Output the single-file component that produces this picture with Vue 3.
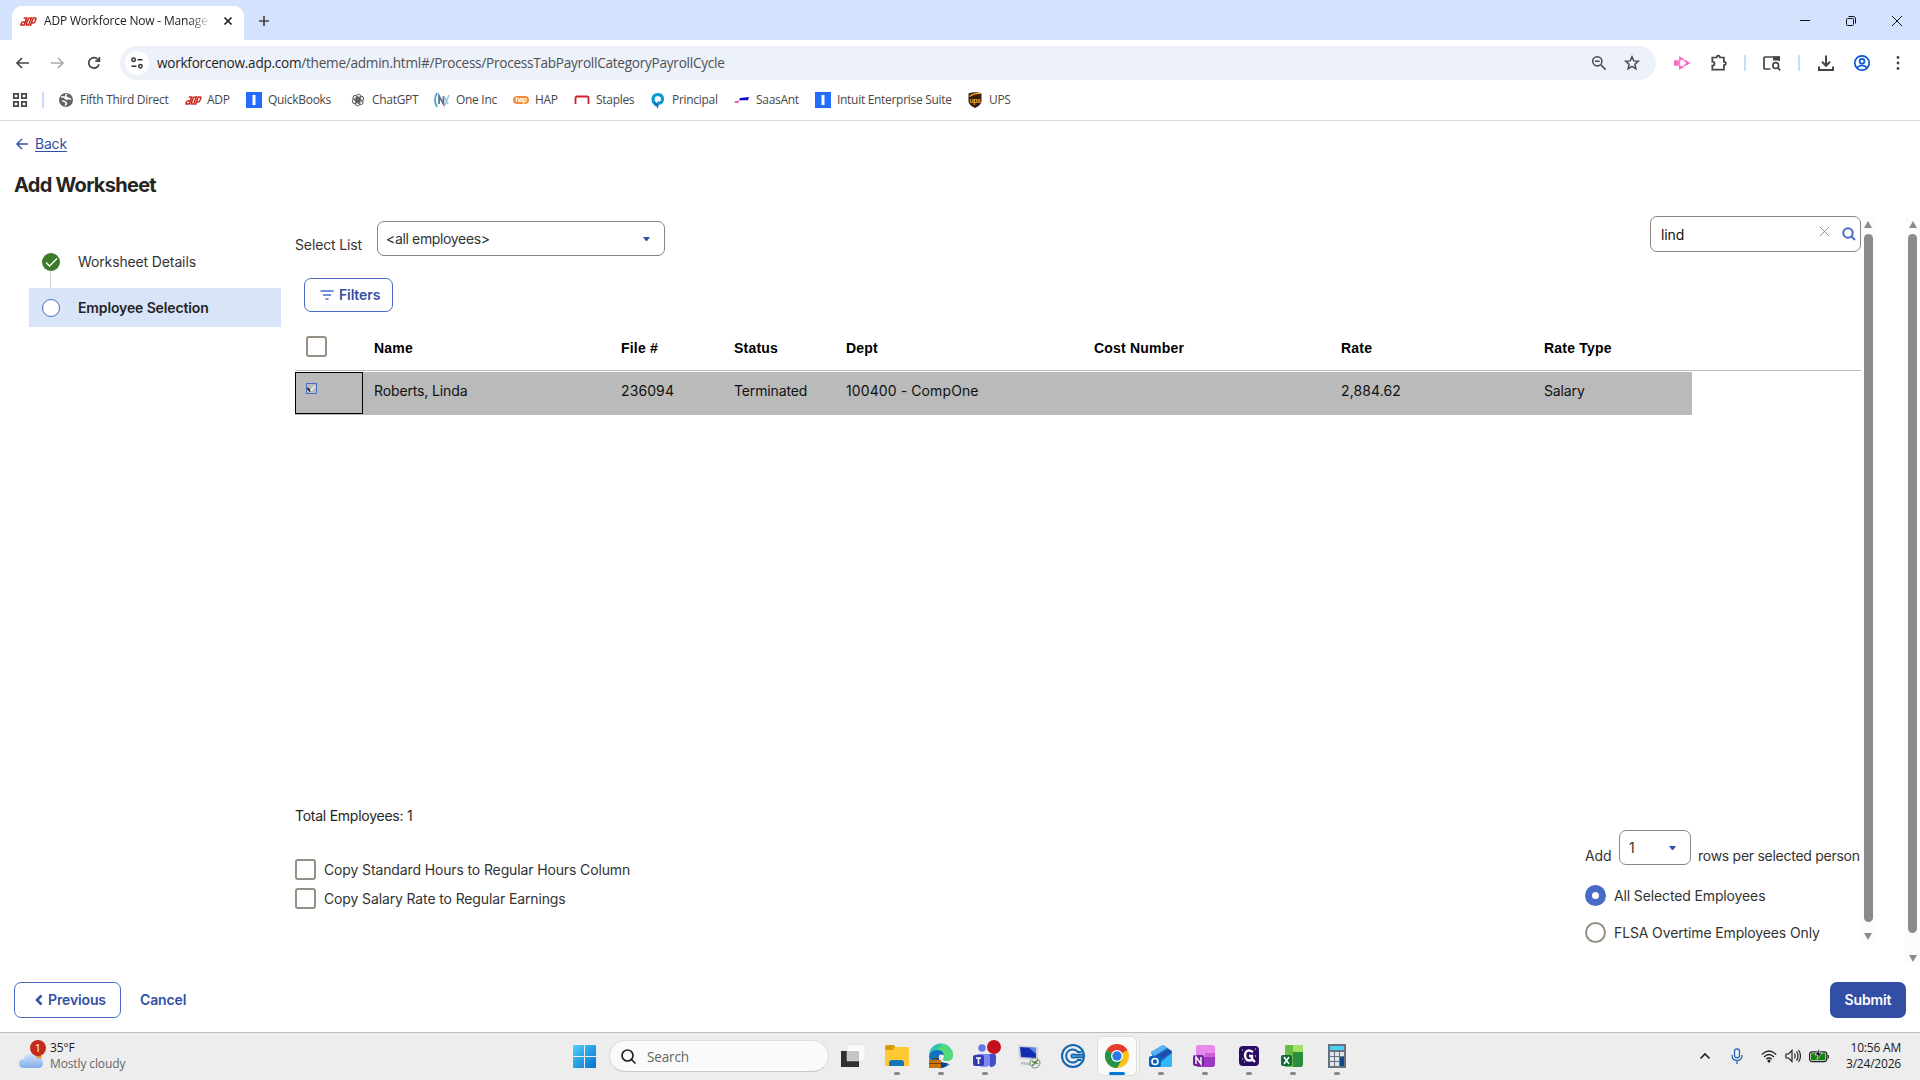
<template>
  <div class="screen">
    <header class="tabs">
      <div class="tab">
        <svg class="adp" viewBox="0 0 16 9"><g transform="translate(2.6 0) skewX(-20)"><path d="M1.500 1h3v7h-2.500q-1 0-1-1.500t1-1.500h2.500M9 8V1H7.500q-1.200 0-1.200 1.500v4Q6.300 8 7.500 8zM11 9V1h1.800q1.200 0 1.200 1.500v2Q14 6 12.800 6H11" /></g></svg>
        <span class="tab-title">ADP Workforce Now - Manage</span>
        <svg class="tab-close" viewBox="0 0 10 10"><path d="M1.5 1.5l7 7M8.5 1.5l-7 7" /></svg>
      </div>
      <svg class="plus" viewBox="0 0 12 12"><path d="M6 1v10M1 6h10" /></svg>
      <div class="window-buttons">
        <svg viewBox="0 0 12 12"><path d="M1 5.5h10" /></svg>
        <svg viewBox="0 0 12 12"><rect x="1.5" y="3.5" width="7" height="7" rx="1" /><path d="M3.5 1.5H8q2.5 0 2.5 2.5v4.5" /></svg>
        <svg viewBox="0 0 12 12"><path d="M1 1l10 10M11 1L1 11" /></svg>
      </div>
    </header>

    <div class="toolbar">
      <svg class="nav-icon" viewBox="0 0 16 16"><path d="M15 8H3M8 3L3 8l5 5" /></svg>
      <svg class="nav-icon off" viewBox="0 0 16 16"><path d="M1 8h12M8 3l5 5-5 5" /></svg>
      <svg class="nav-icon" viewBox="0 0 16 16"><path d="M13 9.2A5.2 5.2 0 1 1 11.8 4.4L13.2 5.8M13.4 2v4.1H9.3" /></svg>
      <div class="omnibox">
        <span class="site">
          <svg viewBox="0 0 14 14"><circle cx="3.6" cy="3.7" r="1.7" /><path d="M7.5 3.7h5M1.5 10.3h5" /><circle cx="10.4" cy="10.3" r="1.7" /></svg>
        </span>
        <span class="url"><b>workforcenow.adp.com</b>/theme/admin.html#/Process/ProcessTabPayrollCategoryPayrollCycle</span>
        <svg class="tool zoom-out" viewBox="0 0 16 16"><circle cx="6.3" cy="6.3" r="4.6" /><path d="M9.8 9.8l4.8 4.8M4 6.3h4.6" /></svg>
        <svg class="tool" viewBox="0 0 16 16"><path d="M8 1.8l1.8 4.1 4.5.4-3.4 3 1 4.4L8 11.4l-3.9 2.3 1-4.4-3.4-3 4.5-.4z" /></svg>
      </div>
      <div class="tools">
        <svg class="pink" viewBox="0 0 16 16"><path class="solid" d="M0 5.2h4.800v5.600H0zM5.200 1.200l5 2.800-5 1.400zM10.500 4.500L16.500 8l-6 3.500 1.500-3.500zM5.200 10.600l5 1.400-5 2.800z" /><path class="thin" d="M5.700 3v10l8.500-5z" /></svg>
        <svg viewBox="0 0 16 16"><path d="M1.3 2.5h4.4q0-1.8 1.6-1.8t1.6 1.8h4v4.3q2 0 2 1.6t-2 1.6v4.7H1.3v-4q2.2 0 2.2-2t-2.2-2z" /></svg>
        <i class="divider"></i>
        <svg class="wide" viewBox="0 0 18 16"><path d="M7.5 14H2q-1 0-1-1V3q0-1 1-1h14v4" /><path class="solid" d="M10 1.5h7v4h-7z" /><circle cx="12.7" cy="10.6" r="2.9" /><path d="M14.8 12.8l2.5 2.6" /></svg>
        <i class="divider"></i>
        <svg class="bold" viewBox="0 0 16 16"><path d="M8 .5v10M4 6.8l4 4 4-4M1 11.5V15h14v-3.5" /></svg>
        <svg class="person" viewBox="0 0 16 16"><circle cx="8" cy="8" r="7.2" /><circle cx="8" cy="6.2" r="2.4" /><path d="M3 13q2-2.6 5-2.6t5 2.6" /></svg>
        <svg class="dots" viewBox="0 0 16 16"><circle cx="8" cy="2.5" r="1.4" /><circle cx="8" cy="8" r="1.4" /><circle cx="8" cy="13.5" r="1.4" /></svg>
      </div>
    </div>

    <nav class="bookmarks">
      <svg class="apps" viewBox="0 0 14 14"><path d="M.8.8h4.4v4.4H.8zM8.8.8h4.4v4.4H8.8zM.8 8.8h4.4v4.4H.8zM8.8 8.8h4.4v4.4H8.8z" /></svg>
      <i class="divider"></i>
      <div v-for="mark in bookmarks" :key="mark.label" class="bookmark" :style="{ width: mark.width + 'px' }">
        <svg v-if="mark.icon === 'globe'" class="mark" viewBox="0 0 16 16"><circle cx="8" cy="8" r="7" fill="#5f6368" /><path d="M3 5q3-.5 4 1t3 1M9 2q-3 2 0 3.500t4 2M4 9q3 0 4 1.500t-1 3" fill="none" stroke="#fff" stroke-width="1.5" /></svg>
        <svg v-else-if="mark.icon === 'adp'" class="mark adp" viewBox="0 0 16 9"><g transform="translate(2.6 0) skewX(-20)"><path d="M1.500 1h3v7h-2.500q-1 0-1-1.500t1-1.500h2.500M9 8V1H7.500q-1.200 0-1.200 1.500v4Q6.300 8 7.500 8zM11 9V1h1.800q1.200 0 1.200 1.500v2Q14 6 12.800 6H11" /></g></svg>
        <svg v-else-if="mark.icon === 'intuit'" class="mark" viewBox="0 0 16 16"><path d="M0 0h16v16H0z" fill="#236cff" /><path d="M6.500 3h3v10h-3z" fill="#fff" /></svg>
        <svg v-else-if="mark.icon === 'gpt'" class="mark" viewBox="0 0 16 16"><g fill="none" stroke="#555" stroke-width=".9"><rect v-for="n in 6" :key="n" x="6.300" y="2.200" width="4.400" height="7" rx="2.200" :transform="`rotate(${n * 60} 8 8)`" /></g></svg>
        <svg v-else-if="mark.icon === 'one'" class="mark" viewBox="0 0 16 16"><path d="M3 1Q-1 8 3 15" stroke="#4aa3d8" stroke-width="1.800" /><path d="M5 12V4l4.500 8V4" stroke="#64748b" stroke-width="1.800" /><path d="M10 4l4 8M15 3l-4 10" stroke="#9cc6e2" stroke-width="1.600" /></svg>
        <svg v-else-if="mark.icon === 'hap'" class="mark" viewBox="0 0 16 16"><rect y="4" width="16" height="8" rx="4" fill="#f58a3c" /><text x="8" y="10.300" text-anchor="middle" font-size="7" font-weight="700" fill="#fff">hap</text></svg>
        <svg v-else-if="mark.icon === 'staples'" class="mark" viewBox="0 0 16 16"><path d="M1.500 12V6.500Q1.500 4.500 3 4.500h10q1.500 0 1.500 2V12" stroke="#cf1f2e" stroke-width="1.800" /></svg>
        <svg v-else-if="mark.icon === 'principal'" class="mark" viewBox="0 0 16 16"><path d="M8.500 11.500q4-.5 4-4.500T8 2.500Q3 2.500 3 7.500q0 3.500 4 6" stroke="#079bd0" stroke-width="3" /><path d="M4 10q2.500 1 3.500 4.500 1-2.500.5-5" stroke="#0070bd" stroke-width="1.500" /></svg>
        <svg v-else-if="mark.icon === 'saas'" class="mark" viewBox="0 0 16 16"><path d="M6 6l9-1-1 3.200H5z" fill="#1306c8" /><path d="M1 9l4-.5-.5 2.500H.5z" fill="#f35cb8" /></svg>
        <svg v-else class="mark" viewBox="0 0 16 16"><path d="M1.500 1.500Q8-1 14.500 1.500V9q0 4-6.500 7-6.500-3-6.500-7z" fill="#351c15" /><path d="M2.500 4.500Q7 1 13.500 1.500" stroke="#f6a623" /><text x="8" y="10.500" text-anchor="middle" font-size="7" font-weight="700" fill="#f6a623">ups</text></svg>
        <span>{{ mark.label }}</span>
      </div>
    </nav>

    <main class="page">
      <a class="back"><svg viewBox="0 0 12 12"><path d="M12 6H1M6 1L1 6l5 5" /></svg><span>Back</span></a>
      <h1>Add Worksheet</h1>
      <div class="body">
        <aside class="steps">
          <div class="step">
            <svg viewBox="0 0 18 18"><circle cx="9" cy="9" r="9" fill="#3b7a2a" /><path d="M4 9.500l3.500 3.500L15 5.500" /></svg>
            <span>Worksheet Details</span>
          </div>
          <i class="connector"></i>
          <div class="step current">
            <i class="ring"></i>
            <span>Employee Selection</span>
          </div>
        </aside>

        <section class="main">
          <div class="list-row">
            <label>Select List</label>
            <div class="select employees"><span>&lt;all employees&gt;</span><i class="caret"></i></div>
            <div class="search">
              <span>lind</span>
              <svg class="clear" viewBox="0 0 12 12"><path d="M1 1l10 10M11 1L1 11" /></svg>
              <svg class="find" viewBox="0 0 14 14"><circle cx="6" cy="6" r="4.700" /><path d="M9.500 9.500l3.500 3.500" /></svg>
            </div>
          </div>
          <button class="filters">
            <svg viewBox="0 0 14 10"><path d="M.5 1h13M3 5h8" /><path d="M5.500 9h3" /></svg>
            <span>Filters</span>
          </button>
          <div class="grid head">
            <div class="pick"><i class="box"></i></div>
            <div v-for="c in columns" :key="c">{{ c }}</div>
          </div>
          <div class="grid row">
            <div class="pick focused"><i class="tiny"><svg viewBox="0 0 9 9"><path d="M.5 4l3 3.500" stroke="#111" /><path d="M3.500 7L8 2" stroke="#eee" /></svg></i></div>
            <div v-for="(v, i) in employee" :key="i" :class="{ num: /^\d/.test(v) }">{{ v }}</div>
          </div>

          <div class="bottom">
            <div class="copy">
              <p>Total Employees: <span>1</span></p>
              <label v-for="o in options" :key="o"><i class="box"></i><span>{{ o }}</span></label>
            </div>
            <div class="adding">
              <div class="add-row">
                <span class="add">Add</span>
                <div class="select count"><span>1</span><i class="caret"></i></div>
                <span class="per">rows per selected person</span>
              </div>
              <label><i class="radio on"></i><span>All Selected Employees</span></label>
              <label><i class="radio"></i><span>FLSA Overtime Employees Only</span></label>
            </div>
          </div>
        </section>

        <div class="scroll inner"><i class="up"></i><i class="thumb"></i><i class="down"></i></div>
        <div class="scroll outer"><i class="up"></i><i class="thumb"></i><i class="down"></i></div>
      </div>
      <footer class="actions">
        <button class="previous"><svg viewBox="0 0 8 12"><path d="M6.500 1.500L2 6l4.500 4.500" /></svg><span>Previous</span></button>
        <button class="cancel">Cancel</button>
        <button class="submit">Submit</button>
      </footer>
    </main>

    <div class="taskbar">
      <div class="weather">
        <svg viewBox="0 0 28 30">
          <defs><linearGradient id="cloud" x2="0" y2="1"><stop stop-color="#d4e5fc" /><stop offset="1" stop-color="#82aeea" /></linearGradient></defs>
          <circle cx="18" cy="17" r="4.500" fill="#f28b1d" />
          <path d="M5 28q-5 0-5-4.500T5 19q1-5.500 6.500-5.500T18 18q6 0 6 5t-5 5z" fill="url(#cloud)" />
          <circle cx="19" cy="8" r="8" fill="#c42b1c" />
          <text x="19" y="12" font-size="11" fill="#fff" text-anchor="middle">1</text>
        </svg>
        <p>35°F<br><span>Mostly cloudy</span></p>
      </div>

      <svg class="start" viewBox="0 0 23 23"><defs><linearGradient id="win" x2="1" y2="1"><stop stop-color="#4fd0fb" /><stop offset="1" stop-color="#0670ce" /></linearGradient></defs><path d="M0 1q0-1 1-1h10v11H0zM12 0h10q1 0 1 1v10H12zM0 12h11v11H1q-1 0-1-1zM12 12h11v10q0 1-1 1H12z" fill="url(#win)" /></svg>
      <div class="find-box">
        <svg viewBox="0 0 15 15"><circle cx="6.500" cy="6.500" r="5.500" /><path d="M10.500 10.500l4 4" /></svg>
        <span>Search</span>
      </div>

      <div class="tasks">
        <div v-for="app in apps" :key="app.name" class="task" :class="[app.name, { running: app.running }]">
          <svg viewBox="0 0 24 24">
            <g v-if="app.name === 'view'"><path d="M0 7h18v16H0z" fill="#303030" /><path d="M6 1h18v16H6z" fill="#fff" fill-opacity=".72" stroke="#ddd" stroke-width=".5" /></g>
            <g v-else-if="app.name === 'files'"><path d="M0 3q0-2 2-2h7l2 3h13v18H0z" fill="#d99a0c" /><path d="M0 6h8l2-3h13q1 0 1 1v17q0 1-1 1H1q-1 0-1-1z" fill="#ffc936" /><path d="M4 22v-3q0-3 3-3h9q3 0 3 3v3z" fill="#1475bd" /></g>
            <g v-else-if="app.name === 'edge'"><path d="M0 12A12 12 0 0 1 24 11q0 6-7 6-3 0-3-2 2-2 0-5Q10 6 4 10z" fill="#2fc3b4" /><path d="M13 0q10 1 11 11 0 5-6 6-4-1-4-2 3-2 0-6-1-3-6-3z" fill="#54d978" /><path d="M0 13q1-7 8-7 6 0 7 5-6-2-6 4 2 7 12 5-5 5-12 4Q1 22 0 13z" fill="#126fc2" /><path d="M10 11q-2 8 9 8-2 4-8 5-5-6-1-13" fill="#153d86" /><path d="M0 16h12v8H0z" fill="#c8730d" /><path d="M4 16v-1.500h4V16M0 19.500h12" stroke="#70400c" fill="none" /></g>
            <g v-else-if="app.name === 'teams'"><circle cx="9" cy="4" r="3.700" fill="#6875e3" /><path d="M13 10h8q2 0 2 2v6q0 5-6 5z" fill="#424fc6" /><path d="M4 10h11q2 0 2 2v6q0 5-6 5-8 0-8-7z" fill="#7c86f4" /><rect y="11" width="11" height="11" rx="2" fill="#303caf" /><path d="M3 14h5M5.500 14v6" stroke="#fff" stroke-width="1.500" /></g>
            <g v-else-if="app.name === 'remote'"><path d="M1 1l20 2v13L2 15z" fill="#cdd2db" /><path d="M3 3l16 1v10L4 13z" fill="#122cb2" /><path d="M11 3l8 1v6z" fill="#5c88e5" /><path d="M5 18l11 1v3L3 20z" fill="#bbc1ca" /><circle cx="18" cy="19" r="5" fill="#e7ebe3" stroke="#888" /><path d="M15 17l3 2-3 3M21 16l-3 2 3 2" stroke="#41843b" stroke-width="1.200" fill="none" /></g>
            <g v-else-if="app.name === 'cc'" fill="none" stroke="#0d65b3" stroke-width="2"><circle cx="12" cy="12" r="11" /><path d="M20.500 8H17A6.600 6.600 0 1 0 17 16h3.500M23 10.800h-9q-3.500-1-3.500 1.200t3.500 1.200h9" /></g>
            <g v-else-if="app.name === 'chrome'"><circle cx="12" cy="12" r="12" fill="#fbc116" /><path d="M12 12L1.600 6A12 12 0 0 1 22.400 6z" fill="#e33b2e" /><path d="M12 12L1.600 6A12 12 0 0 0 12 24L17.200 15z" fill="#229447" /><circle cx="12" cy="12" r="6" fill="#fff" /><circle cx="12" cy="12" r="4.700" fill="#2878e8" /></g>
            <g v-else-if="app.name === 'outlook'"><path d="M2 8L14 1l9 6v13q0 3-3 3H7z" fill="#167bd8" /><path d="M2 8l12-7 4 3L5 12z" fill="#55b3ef" /><path d="M7 12l12-7 4 3-11 8z" fill="#244ba7" /><path d="M23 9v12q0 2-3 2H6z" fill="#32b8f5" /><rect y="12" width="12" height="11" rx="2" fill="#0b61bd" /><circle cx="6" cy="17.500" r="3" fill="none" stroke="#fff" stroke-width="1.600" /></g>
            <g v-else-if="app.name === 'note'"><path d="M5 1h14q3 0 3 3v18H5q-2 0-2-2V3q0-2 2-2z" fill="#e68bea" /><path d="M12 13h10v7q0 3-3 3H4v-9z" fill="#9c38c4" /><path d="M12 9h10v4H12z" fill="#cb60d8" /><rect y="11" width="11" height="11" rx="2" fill="#71259a" /><path d="M3 20v-7l5 7v-7" fill="none" stroke="#fff" stroke-width="1.400" /></g>
            <g v-else-if="app.name === 'gq'"><rect x="2" y="2" width="20" height="20" rx="4" fill="#2c0b62" /><path d="M16 8q-7-4-8 3 0 7 7 5v-4h-3M15 15l3 3" fill="none" stroke="#fff" stroke-width="2.400" /><path d="M5 6h1M7 18h1M18 5h1M5 15h1M18 12h1" stroke="#fff" /></g>
            <g v-else-if="app.name === 'excel'"><path d="M5 1h17v19q0 3-3 3H4V3q0-2 1-2z" fill="#66bd46" /><path d="M12 1h10v7H12z" fill="#a4df68" /><path d="M12 8h10v12q0 3-3 3h-7z" fill="#2c8c40" /><rect y="11" width="11" height="11" rx="2" fill="#14693a" /><path d="M3 13l5 7M8 13l-5 7" stroke="#fff" stroke-width="1.500" /></g>
            <g v-else><path d="M3 0h18v24H3z" fill="#66727e" /><path d="M5 2h14v4H5z" fill="#4bd1f3" /><path d="M5 8h4v4H5zM10 8h4v4h-4zM15 8h4v4h-4zM5 13h4v4H5zM10 13h4v4h-4zM5 18h4v4H5zM10 18h4v4h-4z" fill="#e0e4e8" /><path d="M15 13h4v9h-4z" fill="#11478b" /></g>
          </svg>
          <i v-if="app.name === 'teams'" class="alert"></i>
        </div>
      </div>

      <div class="tray">
        <svg class="chev" viewBox="0 0 12 8"><path d="M1.500 6.500L6 2l4.500 4.500" /></svg>
        <svg class="mic" viewBox="0 0 12 16"><rect x="3.500" y=".8" width="5" height="9" rx="2.500" /><path d="M1 7q0 5.500 5 5.500T11 7M6 12.500V16" /></svg>
        <svg class="wifi" viewBox="0 0 16 13"><path d="M.8 4.500q7.200-7 14.400 0M3 7q5-5 10 0M5.200 9.300q2.800-2.600 5.600 0" /><circle cx="8" cy="11" r="1.500" fill="#222" stroke="none" /></svg>
        <svg class="sound" viewBox="0 0 17 14"><path d="M1 5h2.500L7 1.500v11L3.500 9H1zM9.500 4.500q1.500 2.500 0 5M11.500 2.500q3 4.500 0 9M13.500 1q4 6 0 12" /></svg>
        <svg class="battery" viewBox="0 0 20 14"><rect x=".6" y="2.800" width="17.200" height="9.800" rx="2.500" /><rect x="2" y="4.200" width="14.400" height="7" rx="1" fill="#13850f" stroke="none" /><path d="M19.300 6v3.500" /><path d="M10.500-1L6 6h3L8 10.500 13 4h-3z" fill="#111" stroke="#eee" stroke-width=".7" /></svg>
        <p>10:56 AM<br>3/24/2026</p>
      </div>
    </div>
  </div>
</template>

<script setup>
const bookmarks = [
  { label: 'Fifth Third Direct', icon: 'globe', width: 127 },
  { label: 'ADP', icon: 'adp', width: 61 },
  { label: 'QuickBooks', icon: 'intuit', width: 104 },
  { label: 'ChatGPT', icon: 'gpt', width: 84 },
  { label: 'One Inc', icon: 'one', width: 79 },
  { label: 'HAP', icon: 'hap', width: 61 },
  { label: 'Staples', icon: 'staples', width: 76 },
  { label: 'Principal', icon: 'principal', width: 84 },
  { label: 'SaasAnt', icon: 'saas', width: 81 },
  { label: 'Intuit Enterprise Suite', icon: 'intuit', width: 152 },
  { label: 'UPS', icon: 'ups', width: 60 },
];

const columns = ['Name', 'File #', 'Status', 'Dept', 'Cost Number', 'Rate', 'Rate Type'];
const employee = ['Roberts, Linda', '236094', 'Terminated', '100400 - CompOne', '', '2,884.62', 'Salary'];

const options = [
  'Copy Standard Hours to Regular Hours Column',
  'Copy Salary Rate to Regular Earnings',
];

const apps = [
  { name: 'view' },
  { name: 'files', running: true },
  { name: 'edge', running: true },
  { name: 'teams', running: true },
  { name: 'remote' },
  { name: 'cc' },
  { name: 'chrome', running: true },
  { name: 'outlook', running: true },
  { name: 'note', running: true },
  { name: 'gq', running: true },
  { name: 'excel', running: true },
  { name: 'calc', running: true },
];
</script>

<style>
body {
  margin: 0;
  overflow: hidden;
}
</style>

<style scoped>
* {
  box-sizing: border-box;
}

.screen {
  width: 1920px;
  height: 1080px;
  display: flex;
  flex-direction: column;
  background: #fff;
  color: #333;
  font: 12px "Open Sans", "Noto Sans", sans-serif;
  white-space: nowrap;
  overflow: hidden;
}

svg {
  display: block;
  flex: none;
  fill: none;
  overflow: visible;
}

i {
  display: block;
  flex: none;
}

p, h1 {
  margin: 0;
}

button {
  font: inherit;
  letter-spacing: inherit;
  background: none;
  border: 0;
  padding: 0;
}

/* browser */
.tabs {
  height: 40px;
  flex: none;
  display: flex;
  align-items: center;
  padding: 6px 16px 0 12px;
  background: #d3e3fd;
}

.tab {
  width: 232px;
  height: 34px;
  display: flex;
  align-items: center;
  padding: 0 10px 4px 8px;
  border-radius: 10px 10px 0 0;
  background: #fff;
}

.adp {
  width: 16px;
  height: 9px;
  stroke: #d0271d;
  stroke-width: 1.6;
}

.tab-title {
  width: 164px;
  margin-left: 8px;
  padding-bottom: 1px;
  color: #202124;
  letter-spacing: -.18px;
  overflow: hidden;
  mask-image: linear-gradient(90deg, #000 88%, transparent 102%);
}

.tab-close {
  width: 10px;
  height: 10px;
  margin-left: auto;
  margin-right: 1px;
  stroke: #222;
  stroke-width: 1.7;
}

.plus {
  width: 12px;
  height: 12px;
  margin: 0 0 4px 14px;
  stroke: #444;
  stroke-width: 1.7;
}

.window-buttons {
  display: flex;
  gap: 34px;
  margin: 0 1px 5px auto;
}

.window-buttons svg {
  width: 12px;
  height: 12px;
  stroke: #111;
}

.toolbar {
  height: 40px;
  flex: none;
  display: flex;
  align-items: center;
  padding: 6px 14px 0;
}

.nav-icon {
  width: 16px;
  height: 16px;
  margin-right: 20px;
  stroke: #474747;
  stroke-width: 1.7;
}

.nav-icon.off {
  stroke: #aaa;
}

.omnibox {
  width: 1536px;
  height: 34px;
  flex: none;
  display: flex;
  align-items: center;
  margin-left: -2px;
  padding: 0 16px 0 5px;
  border-radius: 17px;
  background: #ecf1fa;
}

.site {
  width: 24px;
  height: 24px;
  display: grid;
  place-items: center;
  border-radius: 50%;
  background: #fff;
}

.site svg {
  width: 14px;
  height: 14px;
  stroke: #333;
  stroke-width: 1.5;
}

.url {
  margin: 0 auto 1px 8px;
  font-size: 13.6px;
  letter-spacing: -.26px;
  color: #4d5054;
}

.url b {
  color: #1f1f1f;
  font-weight: 400;
}

.tool {
  width: 16px;
  height: 16px;
  stroke: #474747;
  stroke-width: 1.5;
}

.zoom-out {
  margin-right: 17px;
}

.tools {
  display: flex;
  align-items: center;
  margin-left: 18px;
}

.tools svg {
  width: 16px;
  height: 16px;
  margin-right: 18px;
  stroke: #444;
  stroke-width: 1.7;
}

.tools .pink {
  margin-right: 21px;
  stroke: #fb67c3;
}

.tools .pink + svg {
  margin-right: 17px;
}

.pink .solid {
  fill: #fb67c3;
  stroke: none;
}

.pink .thin {
  stroke-width: 1;
}

.tools .wide {
  width: 18px;
  margin-left: 17px;
  margin-right: 17px;
}

.wide .solid {
  fill: #444;
  stroke: none;
}

.tools .bold {
  margin-left: 18px;
  margin-right: 20px;
  stroke-width: 2;
}

.tools .person {
  margin-right: 20px;
  stroke: #0b57d0;
}

.tools .dots {
  margin-right: 0;
  fill: #444;
  stroke: none;
}

.divider {
  width: 2px;
  height: 16px;
  background: #c9dcfb;
}

.bookmarks {
  height: 41px;
  flex: none;
  display: flex;
  align-items: center;
  padding: 0 13px;
  border-bottom: 1px solid #dadce0;
}

.apps {
  width: 14px;
  height: 14px;
  margin-right: 15px;
  stroke: #444;
  stroke-width: 1.7;
}

.bookmarks .divider {
  margin-right: 14px;
}

.bookmark {
  display: flex;
  flex: none;
  align-items: center;
  gap: 6px;
  color: #474747;
  letter-spacing: -.3px;
}

.bookmark span {
  padding-bottom: 1px;
}

.mark {
  width: 16px;
  height: 16px;
  font-family: "Liberation Sans", sans-serif;
  letter-spacing: -.5px;
  stroke-width: 1.3;
}

.mark.adp {
  height: 9px;
  stroke-width: 1.6;
}

/* worksheet page */
.page {
  height: 911px;
  flex: none;
  display: flex;
  flex-direction: column;
  font-family: Inter, "Liberation Sans", sans-serif;
  font-size: 14px;
  letter-spacing: -.13px;
}

.back {
  height: 46px;
  display: flex;
  align-items: center;
  gap: 7px;
  padding-left: 16px;
  color: #334fa5;
  letter-spacing: -.2px;
}

.back span {
  padding-bottom: 1px;
  text-decoration: underline;
  text-underline-offset: 2px;
}

.back svg {
  width: 12px;
  height: 12px;
  stroke: #334fa5;
  stroke-width: 1.4;
}

h1 {
  height: 49px;
  padding: 5px 0 0 14px;
  font-size: 20px;
  line-height: 27px;
  font-weight: 700;
  letter-spacing: -.72px;
  color: #272522;
}

.body {
  height: 750px;
  display: flex;
  align-items: flex-start;
}

.steps {
  width: 252px;
  margin: 28px 14px 0 29px;
}

.step {
  height: 36px;
  display: flex;
  align-items: center;
  gap: 18px;
  padding-left: 13px;
}

.step span {
  padding-bottom: 1px;
}

.step svg {
  width: 18px;
  height: 18px;
  stroke: #fff;
  stroke-width: 1.3;
}

.step svg circle {
  stroke: none;
}

.connector {
  width: 1px;
  height: 17px;
  margin: -9px 0 0 21px;
  background: #d4d2cc;
}

.step.current {
  height: 39px;
  background: #d8e4f8;
  font-weight: 600;
  color: #272522;
}

.ring {
  width: 18px;
  height: 18px;
  border: 1px solid #476bc7;
  border-radius: 50%;
  background: #fff;
}

.main {
  width: 1566px;
}

.list-row {
  height: 62px;
  display: flex;
  align-items: flex-start;
}

.list-row label {
  width: 82px;
  margin-top: 20px;
  line-height: 18px;
}

.select {
  height: 35px;
  flex: none;
  display: flex;
  align-items: center;
  justify-content: space-between;
  border: 1px solid #8c857b;
  border-radius: 7px;
}

.employees {
  width: 288px;
  margin-top: 5px;
  padding: 0 14px 0 8px;
  letter-spacing: -.35px;
}

.employees span {
  padding-bottom: 1px;
}

.caret {
  width: 7px;
  border: 3.5px solid transparent;
  border-top: 4px solid #334fa5;
  border-bottom: 0;
}

.search {
  width: 211px;
  height: 36px;
  display: flex;
  align-items: center;
  margin-left: auto;
  padding: 0 4px 0 10px;
  border: 1px solid #8c857b;
  border-radius: 7px;
  color: #111;
}

.clear {
  width: 11px;
  height: 11px;
  margin: 0 12px 5px auto;
  stroke: #888;
}

.find {
  width: 14px;
  height: 14px;
  stroke: #476bc7;
  stroke-width: 2;
}

.filters {
  width: 89px;
  height: 34px;
  display: flex;
  align-items: center;
  gap: 5px;
  margin-left: 9px;
  padding: 0 0 1px 15px;
  border: 1px solid #476bc7;
  border-radius: 7px;
  color: #334fa5;
  font-weight: 600;
}

.filters span, .previous span {
  padding-bottom: 1px;
}

.filters svg {
  width: 14px;
  height: 10px;
  stroke: #476bc7;
  stroke-width: 1.5;
}

.grid {
  display: grid;
  grid-template-columns: 68px 247px 113px 112px 248px 247px 203px 159px;
  align-items: center;
}

.grid > div {
  padding-left: 11px;
}

.head {
  height: 59px;
  padding-top: 13px;
  border-bottom: 1px solid #bdbdbd;
  font: bold 14px "Liberation Sans", sans-serif;
  letter-spacing: .2px;
  color: #000;
}

.box {
  width: 21px;
  height: 21px;
  border: 2px solid #968f86;
  border-radius: 3px;
  background: #fff;
}

.head .box {
  margin-top: -2px;
}

.row {
  width: 1397px;
  height: 43px;
  margin-top: 1px;
  padding-bottom: 1px;
  background: #bababa;
  color: #111;
}

.row > div {
  padding-bottom: 5px;
}

.row .num {
  letter-spacing: .1px;
}

.row .focused {
  height: 42px;
  padding: 10px 0 0 10px;
  border: 1px solid #000;
}

.tiny {
  width: 11px;
  height: 11px;
  border: 1px solid #476bc7;
  background: #bbb;
}

.tiny svg {
  width: 9px;
  height: 9px;
  stroke-width: 1.8;
}

.bottom {
  display: flex;
  justify-content: space-between;
  margin-top: 392px;
}

.copy p {
  height: 52px;
  line-height: 18px;
  letter-spacing: -.25px;
  color: #272522;
}

.copy label {
  height: 29px;
  display: flex;
  gap: 8px;
  line-height: 22px;
}

.adding {
  width: 276px;
  margin-top: 23px;
}

.add-row {
  height: 47px;
  display: flex;
}

.add, .per {
  margin-top: 17px;
  line-height: 18px;
}

.add {
  width: 34px;
  flex: none;
}

.per {
  letter-spacing: -.27px;
}

.count {
  width: 72px;
  margin-right: 7px;
  padding: 0 14px 0 9px;
}

.adding label {
  height: 37px;
  display: flex;
  align-items: center;
  gap: 8px;
}

.adding label span {
  padding-bottom: 1px;
}

.radio {
  width: 21px;
  height: 21px;
  border: 2px solid #968f86;
  border-radius: 50%;
}

.radio.on {
  border: 7px solid #476bc7;
}

.scroll {
  width: 14px;
  display: flex;
  flex-direction: column;
  align-items: center;
  padding-top: 5px;
  background: #fcfcfc;
}

.inner {
  height: 728px;
}

.outer {
  width: 15px;
  height: 750px;
  margin-left: auto;
}

.up, .down {
  border: 4.5px solid transparent;
}

.up {
  border-top: 0;
  border-bottom: 7px solid #8b8b8b;
}

.down {
  margin-top: 11px;
  border-bottom: 0;
  border-top: 7px solid #8b8b8b;
}

.outer .down {
  margin-top: 22px;
}

.thumb {
  width: 9px;
  height: 688px;
  margin-top: 6px;
  border-radius: 5px;
  background: #8b8b8b;
}

.outer .thumb {
  height: 699px;
}

.actions {
  display: flex;
  padding: 16px 14px 0;
  font-weight: 600;
  color: #334fa5;
}

.actions button {
  height: 36px;
  padding-bottom: 2px;
  color: #334fa5;
}

.actions .previous {
  width: 107px;
  display: flex;
  align-items: center;
  gap: 5px;
  padding: 0 0 1px 20px;
  border: 1px solid #476bc7;
  border-radius: 7px;
}

.previous svg {
  width: 8px;
  height: 12px;
  stroke: #334fa5;
  stroke-width: 2.5;
}

.cancel {
  margin-left: 19px;
}

.actions .submit {
  width: 76px;
  margin-left: auto;
  border-radius: 7px;
  background: #334fa5;
  color: #fff;
}

/* taskbar */
.taskbar {
  height: 48px;
  flex: none;
  display: flex;
  align-items: center;
  padding-bottom: 1px;
  border-top: 1px solid #bdbdbd;
  background: #ededed;
  color: #1b1b1b;
}

.weather {
  width: 554px;
  display: flex;
  align-items: center;
  padding-left: 19px;
}

.weather svg {
  width: 28px;
  height: 30px;
  margin: 0 3px 3px 0;
}

.weather p {
  line-height: 16px;
  letter-spacing: -.12px;
}

.weather span {
  color: #666;
}

.start {
  width: 23px;
  height: 23px;
  margin-left: 19px;
}

.find-box {
  width: 220px;
  height: 32px;
  display: flex;
  align-items: center;
  gap: 11px;
  margin-left: 13px;
  padding-left: 11px;
  border: 1px solid #dcdcdc;
  border-bottom-color: #c8c8c8;
  border-radius: 16px;
  background: #fafafa;
  font-size: 13.6px;
  letter-spacing: -.2px;
  color: #666;
}

.find-box svg {
  width: 15px;
  height: 15px;
  stroke: #222;
  stroke-width: 1.7;
}

.tasks {
  display: flex;
  gap: 6px;
  margin-left: 5px;
}

.task {
  width: 38px;
  height: 38px;
  padding: 7px 7px;
  position: relative;
}

.task svg {
  width: 24px;
  height: 24px;
}

.running::after {
  content: "";
  width: 6px;
  height: 3px;
  position: absolute;
  bottom: 0;
  left: 16px;
  border-radius: 2px;
  background: #888;
}

.chrome {
  border-radius: 5px;
  background: #f9f9f9;
  box-shadow: 0 0 0 1px #dedede, 3px 0 0 0 #f5f5f5, 4px 0 0 0 #dedede;
}

.running.chrome::after {
  width: 16px;
  left: 11px;
  background: #0078d4;
}

.alert {
  width: 14px;
  height: 14px;
  position: absolute;
  top: 3px;
  right: 3px;
  border-radius: 50%;
  background: #c50f1f;
}

.tray {
  display: flex;
  align-items: center;
  margin-left: auto;
  padding-right: 19px;
}

.tray svg {
  stroke: #222;
  stroke-width: 1.2;
}

.tray .chev {
  width: 12px;
  height: 8px;
  margin-right: 20px;
  stroke-width: 1.6;
}

.tray .mic {
  width: 12px;
  height: 16px;
  margin-right: 18px;
  stroke: #1a5fb4;
}

.wifi {
  width: 16px;
  height: 13px;
  margin-right: 8px;
}

.sound {
  width: 17px;
  height: 14px;
  margin-right: 7px;
}

.battery {
  width: 20px;
  height: 14px;
}

.tray p {
  width: 72px;
  text-align: right;
  line-height: 16px;
  letter-spacing: -.2px;
}
</style>
